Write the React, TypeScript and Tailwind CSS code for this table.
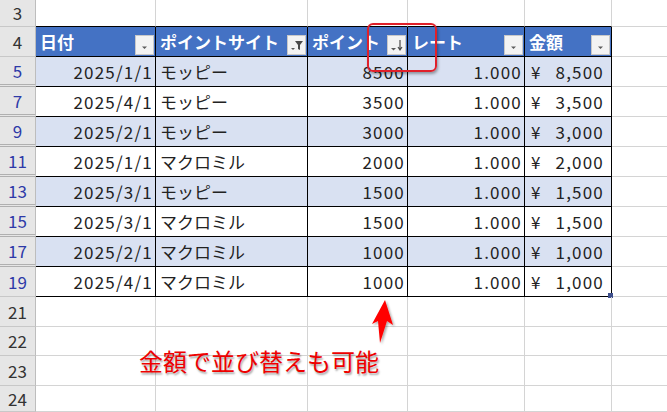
import type { ReactNode } from 'react'

const FONT = { fontFamily: '"Noto Sans CJK JP", "Noto Sans", sans-serif' }

type Row = { n: number; date: string; site: string; pt: string; amt: string }

const rows: Row[] = [
  { n: 5, date: '2025/1/1', site: 'モッピー', pt: '8500', amt: '8,500' },
  { n: 7, date: '2025/4/1', site: 'モッピー', pt: '3500', amt: '3,500' },
  { n: 9, date: '2025/2/1', site: 'モッピー', pt: '3000', amt: '3,000' },
  { n: 11, date: '2025/1/1', site: 'マクロミル', pt: '2000', amt: '2,000' },
  { n: 13, date: '2025/3/1', site: 'モッピー', pt: '1500', amt: '1,500' },
  { n: 15, date: '2025/3/1', site: 'マクロミル', pt: '1500', amt: '1,500' },
  { n: 17, date: '2025/2/1', site: 'マクロミル', pt: '1000', amt: '1,000' },
  { n: 19, date: '2025/4/1', site: 'マクロミル', pt: '1000', amt: '1,000' },
]

function FilterBtn({ kind }: { kind: 'drop' | 'filter' | 'sort' }) {
  return (
    <div className="mb-[1px] mr-[1px] flex h-[20px] w-[19px] shrink-0 items-center justify-center border border-[#c8c8c8] bg-[#f3f3f3]">
      <svg width="15" height="15" viewBox="0 0 15 15">
        {kind === 'drop' && <path d="M5 8.5h5l-2.5 2.5z" fill="#5a5a5a" />}
        {kind === 'filter' && (
          <>
            <path d="M2 10h4l-2 2z" fill="#5a5a5a" />
            <path d="M6 3h8l-3 4v5l-2-1v-4z" fill="#4a4a4a" />
          </>
        )}
        {kind === 'sort' && (
          <>
            <path d="M2 10h5l-2.5 2.5z" fill="#5a5a5a" />
            <path d="M11 2v9M9 9l2 3 2-3" stroke="#4a4a4a" strokeWidth="1.2" fill="none" />
          </>
        )}
      </svg>
    </div>
  )
}

function RowHead({ n, blue, dbl }: { n: number; blue?: boolean; dbl?: boolean }) {
  return (
    <div
      className={`flex h-full w-[36px] shrink-0 items-center justify-center border-r border-[#bdbdbd] bg-[#e6e6e6] text-[17px] ${
        dbl ? 'border-b-[3px] border-b-[#b0b0b0] border-double' : 'border-b border-b-[#c8c8c8]'
      } ${blue ? 'text-[#2e3aa8]' : 'text-[#333]'}`}
    >
      {n}
    </div>
  )
}

function Cell({ w, cls, children }: { w: string; cls: string; children?: ReactNode }) {
  return <div className={`relative flex h-full shrink-0 items-center ${w} ${cls}`}>{children}</div>
}

const W = ['w-[120px]', 'w-[152px]', 'w-[100px]', 'w-[117px]', 'w-[87px]']

function EmptyRow({ n, h, tableBelow }: { n: number; h: string; tableBelow?: boolean }) {
  const b = tableBelow ? 'border-b border-b-black' : 'border-b border-b-[#d4d4d4]'
  return (
    <div className={`flex ${h}`}>
      <RowHead n={n} />
      {W.map((w, i) => (
        <Cell key={i} w={w} cls={`${b} border-r border-r-[#d4d4d4]`} />
      ))}
      <div className="h-full flex-1 border-b border-b-[#d4d4d4]" />
    </div>
  )
}

export default function App() {
  return (
    <div className="relative h-[412px] w-[667px] overflow-hidden bg-white text-[#222]" style={FONT}>
      <EmptyRow n={3} h="h-[27px]" tableBelow />

      {/* header row 4 */}
      <div className="flex h-[30px]">
        <RowHead n={4} />
        {[
          ['日付', 'drop'],
          ['ポイントサイト', 'filter'],
          ['ポイント', 'sort'],
          ['レート', 'drop'],
          ['金額', 'drop'],
        ].map(([t, k], i) => (
          <Cell
            key={i}
            w={W[i]}
            cls="justify-between border-b border-r border-black bg-[#4472c4] pl-[4px] text-[17px] font-bold text-white"
          >
            <span className="self-center">{t}</span>
            <div className="self-end">
              <FilterBtn kind={k as 'drop' | 'filter' | 'sort'} />
            </div>
          </Cell>
        ))}
        <div className="h-full flex-1 border-b border-b-[#d4d4d4]" />
      </div>

      {rows.map((r, idx) => {
        const bg = idx % 2 === 0 ? 'bg-[#d9e1f2]' : 'bg-white'
        const c = `${bg} border-b border-r border-black text-[17px]`
        return (
          <div key={r.n} className="flex h-[30px]">
            <RowHead n={r.n} blue dbl={idx < rows.length - 1} />
            <Cell w={W[0]} cls={`${c} justify-end pr-[2px] tracking-[1.2px]`}>{r.date}</Cell>
            <Cell w={W[1]} cls={`${c} pl-[4px]`}>{r.site}</Cell>
            <Cell w={W[2]} cls={`${c} justify-end pr-[2px] tracking-[1.2px]`}>{r.pt}</Cell>
            <Cell w={W[3]} cls={`${c} justify-end pr-[2px] tracking-[1.2px]`}>1.000</Cell>
            <Cell w={W[4]} cls={`${c} justify-between pl-[6px] pr-[7px]`}>
              <span>¥</span>
              <span className="tracking-[1.2px]">{r.amt}</span>
              {idx === rows.length - 1 && (
                <span className="absolute bottom-[-2px] right-[-2px] h-[5px] w-[5px] bg-[#3e4f8c]" />
              )}
            </Cell>
            <div className="h-full flex-1 border-b border-b-[#d4d4d4]" />
          </div>
        )
      })}

      <EmptyRow n={21} h="h-[30px]" />
      <EmptyRow n={22} h="h-[29px]" />
      <EmptyRow n={23} h="h-[30px]" />
      <EmptyRow n={24} h="h-[26px]" />

      {/* callout box around sort button */}
      <div className="absolute left-[367px] top-[23px] h-[49px] w-[70px] rounded-[6px] border-2 border-[#e0202a] shadow-[1px_2px_3px_rgba(0,0,0,0.35)]" />

      {/* arrow */}
      <svg className="absolute left-[366px] top-[296px]" width="34" height="52" viewBox="0 0 34 52">
        <defs>
          <filter id="sh" x="-30%" y="-30%" width="160%" height="160%">
            <feDropShadow dx="1.5" dy="1.5" stdDeviation="1.2" floodColor="#000" floodOpacity="0.35" />
          </filter>
        </defs>
        <path d="M19 4 L27 29 L21 25 L14 47 L12 25 L6 28 Z" fill="#ff0000" filter="url(#sh)" />
      </svg>

      {/* caption */}
      <div className="absolute left-[139px] top-[346px] text-[24px] leading-[30px] text-[#ee0000] [text-shadow:1px_2px_2px_rgba(0,0,0,0.35)]">
        金額で並び替えも可能
      </div>
    </div>
  )
}
